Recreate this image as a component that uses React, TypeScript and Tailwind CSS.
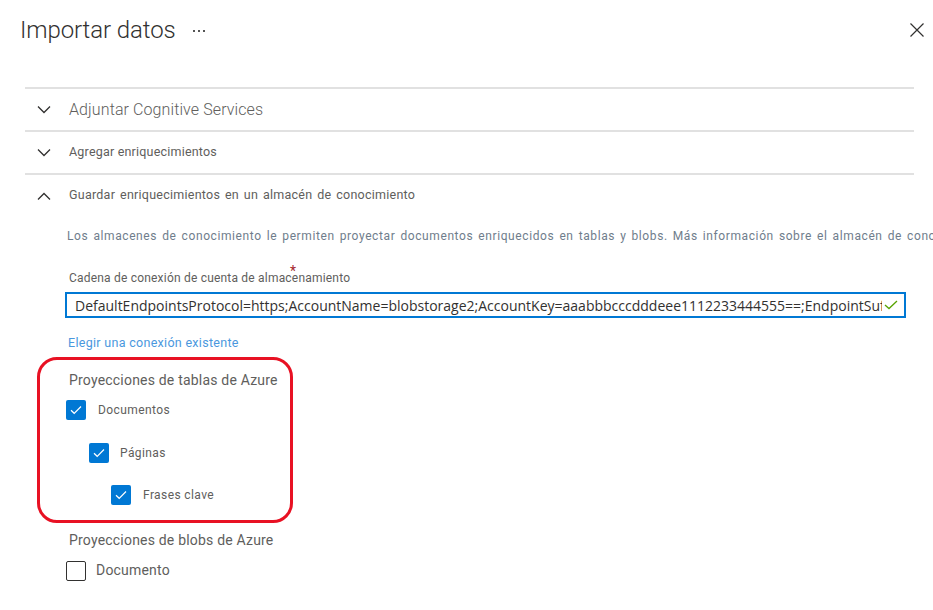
import React from "react";

function Chevron({ up }: { up?: boolean }) {
  return (
    <svg width="14" height="8" viewBox="0 0 14 8" className="shrink-0">
      <path
        d={up ? "M1 7.5 L7 1.5 L13 7.5" : "M1 0.5 L7 6.5 L13 0.5"}
        fill="none"
        stroke="#323130"
        strokeWidth="1.3"
      />
    </svg>
  );
}

function Box({ checked }: { checked: boolean }) {
  if (!checked) {
    return <div className="h-[20px] w-[20px] shrink-0 rounded-[2px] border border-[#323130] bg-white" />;
  }
  return (
    <div className="flex h-[20px] w-[20px] shrink-0 items-center justify-center rounded-[2px] bg-[#0078d4]">
      <svg width="12" height="10" viewBox="0 0 12 10">
        <path d="M1 5.2 L4.2 8.3 L11 1.5" fill="none" stroke="#ffffff" strokeWidth="1.2" />
      </svg>
    </div>
  );
}

function Row({ label, size, up, spacing }: { label: string; size: string; up?: boolean; spacing?: string }) {
  return (
    <div className="flex h-[43px] items-center border-t-2 border-[#e1e1e1] pl-[12px]">
      <Chevron up={up} />
      <span className={`ml-[18px] text-[#605e5c] ${size} ${spacing ?? ""}`}>{label}</span>
    </div>
  );
}

export default function App() {
  return (
    <div
      className="relative h-[610px] w-[933px] overflow-hidden bg-white"
      style={{ fontFamily: "Roboto, 'Liberation Sans', sans-serif" }}
    >
      <div className="flex h-[58px] items-center pl-[20px] pr-[9px]">
        <span className="mt-[2px] text-[24px] font-light tracking-[-0.1px] text-[#323130]">Importar datos</span>
        <span className="ml-[17px] flex gap-[3px] pt-[3px]">
          <span className="h-[2px] w-[2px] bg-[#555]" />
          <span className="h-[2px] w-[2px] bg-[#555]" />
          <span className="h-[2px] w-[2px] bg-[#555]" />
        </span>
        <svg width="14" height="14" viewBox="0 0 14 14" className="ml-auto mt-[1px]">
          <path d="M0.5 0.5 L13.5 13.5 M13.5 0.5 L0.5 13.5" stroke="#323130" strokeWidth="1.2" />
        </svg>
      </div>

      <div className="ml-[25px] mt-[29px] w-[889px]">
        <Row label="Adjuntar Cognitive Services" size="text-[16px] font-light" spacing="tracking-[0.1px]" />
        <Row label="Agregar enriquecimientos" size="text-[12.5px]" spacing="tracking-[0.2px]" />
        <Row
          label="Guardar enriquecimientos en un almacén de conocimiento"
          size="text-[12.5px]"
          spacing="tracking-[0.25px] [word-spacing:1.5px]"
          up
        />

        <div className="pl-[40px]">
          <div className="ml-[2px] mt-[12px] h-[16px] whitespace-nowrap text-[12px] leading-[16px] tracking-[0.6px] [word-spacing:1.5px] text-[#6f7d8c]">
            Los almacenes de conocimiento le permiten proyectar documentos enriquecidos en tablas y blobs. Más información sobre el almacén de conocimiento
          </div>

          <div className="relative ml-[4px] mt-[26px] h-[16px] text-[12px] leading-[16px] tracking-[0.2px] text-[#605e5c]">
            Cadena de conexión de cuenta de almacenamiento
            <span className="absolute left-[221px] top-[-7px] text-[14px] text-[#a4262c]">*</span>
          </div>

          <div className="mt-[6px] flex h-[26px] w-[841px] items-center overflow-hidden border-2 border-[#0078d4] pl-[8px] pr-[6px]">
            <span
              className="flex-1 overflow-hidden whitespace-nowrap text-[14px] text-[#323130]"
              style={{ fontFamily: "'Open Sans', 'Noto Sans', sans-serif" }}
            >
              DefaultEndpointsProtocol=https;AccountName=blobstorage2;AccountKey=aaabbbcccdddeee1112233444555==;EndpointSuffix=core.windows.net
            </span>
            <svg width="14" height="10" viewBox="0 0 14 10" className="ml-[2px] shrink-0">
              <path d="M1 5 L5 8.5 L13 1" fill="none" stroke="#57a300" strokeWidth="1.3" />
            </svg>
          </div>

          <div className="ml-[3px] mt-[17px] h-[16px] text-[12.5px] leading-[16px] tracking-[0.3px] text-[#4a98de]">
            Elegir una conexión existente
          </div>

          <div className="ml-[-28px] mt-[6px] w-[256px] rounded-[20px] border-[3px] border-[#e81123] pb-[15px] pl-[26px] pt-[11px]">
            <div className="ml-[3px] h-[18px] text-[14px] leading-[18px] tracking-[0.2px] text-[#605e5c]">
              Proyecciones de tablas de Azure
            </div>
            <div className="mt-[11px] flex items-center">
              <Box checked />
              <span className="ml-[12px] text-[12px] tracking-[0.4px] text-[#605e5c]">Documentos</span>
            </div>
            <div className="ml-[23px] mt-[23px] flex items-center">
              <Box checked />
              <span className="ml-[11px] text-[12px] tracking-[0.4px] text-[#605e5c]">Páginas</span>
            </div>
            <div className="ml-[45px] mt-[22px] flex items-center">
              <Box checked />
              <span className="ml-[12px] text-[12px] tracking-[0.4px] text-[#605e5c]">Frases clave</span>
            </div>
          </div>

          <div className="ml-[4px] mt-[8px] h-[18px] text-[14px] leading-[18px] tracking-[0.2px] text-[#605e5c]">
            Proyecciones de blobs de Azure
          </div>
          <div className="ml-[1px] mt-[11px] flex items-center">
            <Box checked={false} />
            <span className="ml-[10px] text-[14px] tracking-[0.2px] text-[#605e5c]">Documento</span>
          </div>
        </div>
      </div>
    </div>
  );
}
